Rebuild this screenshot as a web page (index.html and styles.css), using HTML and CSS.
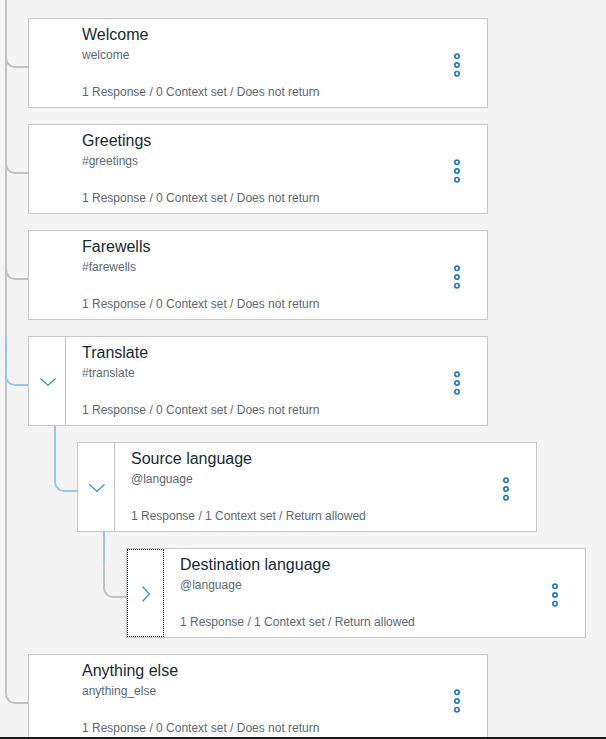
FILE: index.html
```html
<!DOCTYPE html>
<html lang="en">
<head>
    <meta charset="UTF-8">
    <meta name="viewport" content="width=device-width, initial-scale=1.0">
    <title>Dialog nodes</title>
    <link rel="stylesheet" href="styles.css">
</head>
<body>
    <ul class="tree">
        <li class="tree-item">
            <div class="node">
                <div class="node-toggle"></div>
                <div class="node-body">
                    <div class="node-title">Welcome</div>
                    <div class="node-condition">welcome</div>
                    <div class="node-summary">1 Response / 0 Context set / Does not return</div>
                </div>
                <button class="node-menu" aria-label="Options">
                    <svg width="8" height="24" viewBox="0 0 8 24"><circle cx="4" cy="3.35" r="2.15"/><circle cx="4" cy="12" r="2.15"/><circle cx="4" cy="20.65" r="2.15"/></svg>
                </button>
            </div>
        </li>
        <li class="tree-item">
            <div class="node">
                <div class="node-toggle"></div>
                <div class="node-body">
                    <div class="node-title">Greetings</div>
                    <div class="node-condition">#greetings</div>
                    <div class="node-summary">1 Response / 0 Context set / Does not return</div>
                </div>
                <button class="node-menu" aria-label="Options">
                    <svg width="8" height="24" viewBox="0 0 8 24"><circle cx="4" cy="3.35" r="2.15"/><circle cx="4" cy="12" r="2.15"/><circle cx="4" cy="20.65" r="2.15"/></svg>
                </button>
            </div>
        </li>
        <li class="tree-item">
            <div class="node">
                <div class="node-toggle"></div>
                <div class="node-body">
                    <div class="node-title">Farewells</div>
                    <div class="node-condition">#farewells</div>
                    <div class="node-summary">1 Response / 0 Context set / Does not return</div>
                </div>
                <button class="node-menu" aria-label="Options">
                    <svg width="8" height="24" viewBox="0 0 8 24"><circle cx="4" cy="3.35" r="2.15"/><circle cx="4" cy="12" r="2.15"/><circle cx="4" cy="20.65" r="2.15"/></svg>
                </button>
            </div>
        </li>
        <li class="tree-item">
            <div class="node link-active link-start">
                <button class="node-toggle has-children" aria-label="Collapse">
                    <svg width="16" height="8" viewBox="0 0 16 8"><polyline points="0.5,0.5 8,7.4 15.5,0.5"/></svg>
                </button>
                <div class="node-body">
                    <div class="node-title">Translate</div>
                    <div class="node-condition">#translate</div>
                    <div class="node-summary">1 Response / 0 Context set / Does not return</div>
                </div>
                <button class="node-menu" aria-label="Options">
                    <svg width="8" height="24" viewBox="0 0 8 24"><circle cx="4" cy="3.35" r="2.15"/><circle cx="4" cy="12" r="2.15"/><circle cx="4" cy="20.65" r="2.15"/></svg>
                </button>
            </div>
            <ul class="tree-children">
                <li class="tree-item">
                    <div class="node link-active">
                        <button class="node-toggle has-children" aria-label="Collapse">
                            <svg width="16" height="8" viewBox="0 0 16 8"><polyline points="0.5,0.5 8,7.4 15.5,0.5"/></svg>
                        </button>
                        <div class="node-body">
                            <div class="node-title">Source language</div>
                            <div class="node-condition">@language</div>
                            <div class="node-summary">1 Response / 1 Context set / Return allowed</div>
                        </div>
                        <button class="node-menu" aria-label="Options">
                            <svg width="8" height="24" viewBox="0 0 8 24"><circle cx="4" cy="3.35" r="2.15"/><circle cx="4" cy="12" r="2.15"/><circle cx="4" cy="20.65" r="2.15"/></svg>
                        </button>
                    </div>
                    <ul class="tree-children">
                        <li class="tree-item">
                            <div class="node link-split">
                                <button class="node-toggle has-children is-focused" aria-label="Expand">
                                    <svg width="8" height="16" viewBox="0 0 8 16"><polyline points="0.5,0.5 7.4,8 0.5,15.5"/></svg>
                                </button>
                                <div class="node-body">
                                    <div class="node-title">Destination language</div>
                                    <div class="node-condition">@language</div>
                                    <div class="node-summary">1 Response / 1 Context set / Return allowed</div>
                                </div>
                                <button class="node-menu" aria-label="Options">
                                    <svg width="8" height="24" viewBox="0 0 8 24"><circle cx="4" cy="3.35" r="2.15"/><circle cx="4" cy="12" r="2.15"/><circle cx="4" cy="20.65" r="2.15"/></svg>
                                </button>
                            </div>
                        </li>
                    </ul>
                </li>
            </ul>
        </li>
        <li class="tree-item">
            <div class="node">
                <div class="node-toggle"></div>
                <div class="node-body">
                    <div class="node-title">Anything else</div>
                    <div class="node-condition">anything_else</div>
                    <div class="node-summary">1 Response / 0 Context set / Does not return</div>
                </div>
                <button class="node-menu" aria-label="Options">
                    <svg width="8" height="24" viewBox="0 0 8 24"><circle cx="4" cy="3.35" r="2.15"/><circle cx="4" cy="12" r="2.15"/><circle cx="4" cy="20.65" r="2.15"/></svg>
                </button>
            </div>
        </li>
    </ul>
</body>
</html>
```

FILE: styles.css
```css
html {
    overflow: hidden;
}

body {
    margin: 0;
    font-family: "Liberation Sans", Arial, sans-serif;
    background: #f4f4f4;
    height: 100vh;
    box-sizing: border-box;
    border-bottom: 2px solid #1b1b1b;
    overflow: hidden;
}

.tree,
.tree-children {
    list-style: none;
    margin: 0;
    padding: 0 0 0 28px;
}

.tree-children {
    padding-left: 49px;
}

.tree-item {
    position: relative;
    padding-top: 16px;
}

.tree > .tree-item:first-child {
    padding-top: 18px;
}

/* main vertical line between siblings */
.tree-item:not(:last-child)::after {
    content: '';
    position: absolute;
    left: -23px;
    top: 0;
    bottom: 0;
    width: 2px;
    background: #c1c1c1;
}

.node {
    position: relative;
    display: flex;
    width: 460px;
    height: 90px;
    box-sizing: border-box;
    background: #fff;
    border: 1px solid #c6c6c6;
}

/* curved connector into the card */
.node::before {
    content: '';
    position: absolute;
    left: -24px;
    top: -17px;
    width: 23px;
    height: 66px;
    box-sizing: border-box;
    border-left: 2px solid #c1c1c1;
    border-bottom: 2px solid #c1c1c1;
    border-bottom-left-radius: 10px;
    z-index: 1;
}

.node.link-active::before {
    border-color: #97c5f2;
}

.node.link-start::before {
    top: 0;
    height: 49px;
}

.node.link-split::after {
    content: '';
    position: absolute;
    left: -24px;
    top: -17px;
    width: 2px;
    height: 31px;
    background: #97c5f2;
    z-index: 2;
}

.node-toggle {
    flex: none;
    width: 37px;
    box-sizing: border-box;
    margin: 0;
    padding: 2px 0 0 2px;
    border: none;
    border-right: 1px solid transparent;
    background: none;
    display: flex;
    align-items: center;
    justify-content: center;
}

.node-toggle.has-children {
    border-right-color: #c6c6c6;
    cursor: pointer;
}

.node-toggle svg polyline {
    fill: none;
    stroke: #2e8ed8;
    stroke-width: 1.2;
}

.node-toggle.is-focused {
    outline: 1px dotted #222;
    outline-offset: -1px;
}

.node-body {
    flex: 1;
    min-width: 0;
    display: flex;
    flex-direction: column;
    padding: 7px 16px 7px;
}

.node-title {
    font-size: 16px;
    line-height: 18px;
    color: #152935;
}

.node-condition {
    margin-top: 3px;
    font-size: 12px;
    line-height: 16px;
    color: #5a6872;
}

.node-summary {
    margin-top: auto;
    font-size: 12px;
    line-height: 16px;
    color: #5a6872;
}

.node-menu {
    flex: none;
    align-self: center;
    margin: 4px 26px 0 0;
    padding: 0;
    border: none;
    background: none;
    display: flex;
    cursor: pointer;
}

.node-menu svg circle {
    fill: none;
    stroke: #1d7ac9;
    stroke-width: 1.7;
}
```
